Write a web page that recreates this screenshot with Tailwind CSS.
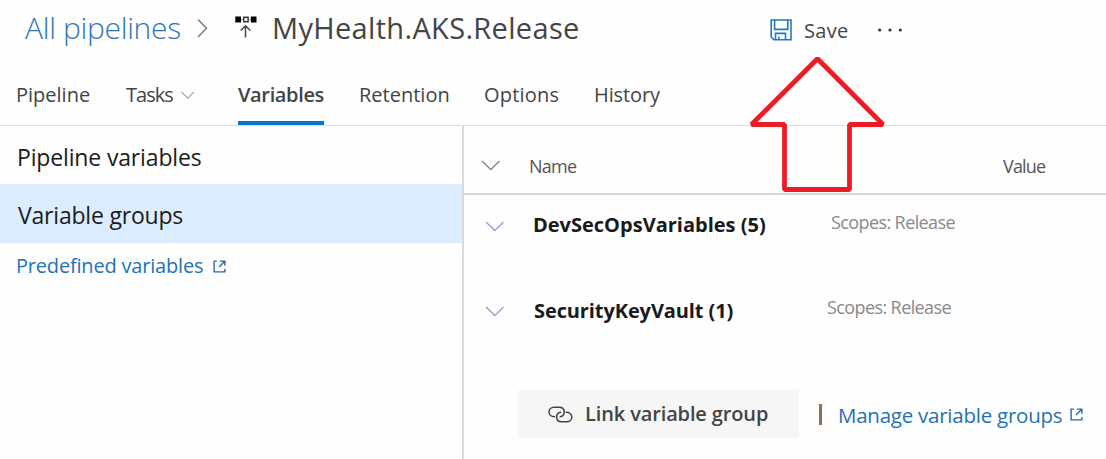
<!DOCTYPE html>
<html lang="en">
<head>
<meta charset="utf-8">
<title>MyHealth.AKS.Release - Variables</title>
<script src="https://cdn.jsdelivr.net/npm/@tailwindcss/browser@4"></script>
</head>
<body class="relative w-[1106px] h-[459px] overflow-hidden bg-[#fefefe] font-['Open_Sans',sans-serif] text-[20px] text-[#444] whitespace-nowrap flex flex-col">

<header class="h-14 shrink-0 flex items-center pl-[25px]">
  <a class="w-[171px] text-[30px] font-light leading-9 tracking-[-0.33px] text-[#2f74b8]">All pipelines</a>
  <svg class="w-[14px] h-5" viewBox="0 0 14 20" fill="none" stroke="#777" stroke-width="1.4"><path d="M2 1.5 L10.5 10.2 L2 19"/></svg>
  <svg class="w-[22px] h-6 ml-[25px] mr-[15px]" viewBox="0 0 22 24" fill="none">
    <path d="M0.3 0.5h5.7v6h-5.7zM15.8 0.5h5.7v6h-5.7z" fill="#000"/>
    <rect x="8.7" y="1.3" width="4.4" height="4.4" stroke="#333" stroke-width="1.5"/>
    <path d="M6 3.5h2M13.8 3.5h2" stroke="#999" stroke-width="1"/>
    <path d="M10.5 21.5V9.8M5.7 14.5l4.8-4.8 4.8 4.8" stroke="#444" stroke-width="1.5"/>
  </svg>
  <h1 class="w-[498px] text-[29px] leading-9 tracking-[0.33px]">MyHealth.AKS.Release</h1>
  <button class="flex items-center mt-1 w-[107px]">
    <svg class="w-[22px] h-[22px] mr-3" viewBox="0 0 22 22" fill="none" stroke="#2377c4" stroke-width="1.6">
      <path d="M1.2 1h19.8v19.8H4L1.2 18z"/><path d="M4.6 1v9.4h13.2V1"/><path d="M5.5 20.8v-6.4h10v6.4M8.8 20.8v-3.4"/>
    </svg>
    <span class="leading-7 tracking-[0.31px] mt-px">Save</span>
  </button>
  <svg class="w-[28px] h-1 mt-1" viewBox="0 0 28 4" fill="#333"><circle cx="2.7" cy="2" r="1.6"/><circle cx="13" cy="2" r="1.6"/><circle cx="23.3" cy="2" r="1.6"/></svg>
</header>

<nav class="h-[70px] shrink-0 flex pt-[25px] pl-4 border-b border-[#dcdcdc] leading-7">
  <a class="w-[110px]">Pipeline</a>
  <a class="w-[112px] flex"><span class="w-[54px] tracking-[-0.95px]">Tasks</span>
    <svg class="w-4 h-4 mt-[6px]" viewBox="0 0 16 16" fill="none" stroke="#aaa" stroke-width="1.3"><path d="M1.5 5l6.3 6.2L14 5"/></svg></a>
  <a class="w-[121px] font-semibold"><span class="tracking-[-0.35px]">Variables</span><span class="block mt-3 h-1 w-[86px] bg-[#0078d7]"></span></a>
  <a class="w-[125px]">Retention</a>
  <a class="w-[110px] tracking-[0.2px]">Options</a>
  <a class="tracking-[-0.11px]">History</a>
</nav>

<main class="flex-1 flex">
  <aside class="w-[462px] shrink-0 text-[#1c1c1c]">
    <div class="h-[58px] pl-[17px] pt-4 text-[23px] leading-[30px] tracking-[-0.15px]">Pipeline variables</div>
    <div class="h-[59px] pl-[18px] pt-4 text-[23px] leading-[30px] tracking-[-0.2px] bg-[#dcedff]">Variable groups</div>
    <a class="flex items-center pl-4 pt-[9px] leading-7 tracking-[-0.19px] text-[#2372b5]"><span class="w-[197px]">Predefined variables</span>
      <svg class="w-[13px] h-[13px]" viewBox="0 0 14 14" fill="none" stroke="#2a68a8" stroke-width="1.5"><path d="M4.2 1.2H1.2v11.6h11.6V9.6M7.4 1.2h5.4v5M12.6 1.4L6.5 7.5"/></svg></a>
  </aside>

  <section class="flex-1 border-l-2 border-[#dadada]">
    <div class="h-[69px] flex items-center pt-[10px] border-b-2 border-[#d8d8d8] text-[18px] leading-6 text-[#555]">
      <svg class="w-5 h-3 ml-[17px] mr-[28px]" viewBox="0 0 20 12" fill="none" stroke="#7b8794" stroke-width="1.3"><path d="M1 2l8.8 8.5L18.5 2"/></svg>
      <span class="w-[474px] tracking-[-0.74px] mt-[2px]">Name</span>
      <span class="tracking-[-0.83px] mt-[2px]">Value</span>
    </div>
    <div class="h-[86px] flex items-start pt-4">
      <svg class="w-5 h-3 ml-[21px] mr-[28px] mt-[9px]" viewBox="0 0 20 12" fill="none" stroke="#8ea4d2" stroke-width="1.3"><path d="M1 2l8.8 8.5L18.5 2"/></svg>
      <span class="w-[298px] leading-7 font-bold text-[#1a1a1a]">DevSecOpsVariables (5)</span>
      <span class="text-[18px] leading-[22px] tracking-[-0.6px] text-[#898989]">Scopes: Release</span>
    </div>
    <div class="h-[109px] flex items-start pt-4">
      <svg class="w-5 h-3 ml-[21px] mr-[29px] mt-[8px]" viewBox="0 0 20 12" fill="none" stroke="#8ea4d2" stroke-width="1.3"><path d="M1 2l8.8 8.5L18.5 2"/></svg>
      <span class="w-[293px] leading-7 tracking-[-0.1px] font-bold text-[#1a1a1a]">SecurityKeyVault (1)</span>
      <span class="text-[18px] leading-[22px] -mt-px tracking-[-0.6px] text-[#898989]">Scopes: Release</span>
    </div>
    <div class="flex items-center pl-[54px]">
      <button class="w-[281px] h-12 bg-[#f6f6f6] flex items-center pl-[30px] font-semibold tracking-[-0.13px]">
        <svg class="w-[25px] h-[17px] mr-[12px]" viewBox="0 0 25 17" fill="none" stroke="#444" stroke-width="1.5" stroke-linecap="round">
          <path d="M6.5 10.7C3.3 10.7 1 8.8 1 6S3.3 1.2 6 1.2h5.2c3 0 5 2 5 4.8 0 2.6-1.6 4.4-4 4.7"/>
          <path d="M18.2 6.3c3.2 0 5.6 1.9 5.6 4.7s-2.3 4.8-5 4.8h-5.2c-3 0-5-2-5-4.8 0-2.6 1.6-4.4 4-4.7"/>
        </svg>
        <span>Link variable group</span>
      </button>
      <span class="w-[3px] h-[21px] bg-[#8c7058] ml-5 mr-4"></span>
      <a class="flex items-center text-[#2372b5]"><span class="w-[232px] text-[20.5px] leading-7 tracking-[-0.24px] mt-[2px]">Manage variable groups</span>
        <svg class="w-[13px] h-[13px] mt-px" viewBox="0 0 14 14" fill="none" stroke="#2a68a8" stroke-width="1.5"><path d="M4.2 1.2H1.2v11.6h11.6V9.6M7.4 1.2h5.4v5M12.6 1.4L6.5 7.5"/></svg></a>
    </div>
  </section>
</main>

<!-- Callout arrow pointing at Save -->
<svg class="absolute left-[745px] top-[50px] w-[145px] h-[145px]" viewBox="745 50 145 145" fill="none" stroke="#ed1c24" stroke-width="4.8" stroke-linejoin="bevel"><path d="M817.5 58.7L883 124.5H849.5V189.5H784.5V124.5H751.5Z"/></svg>
</body>
</html>
